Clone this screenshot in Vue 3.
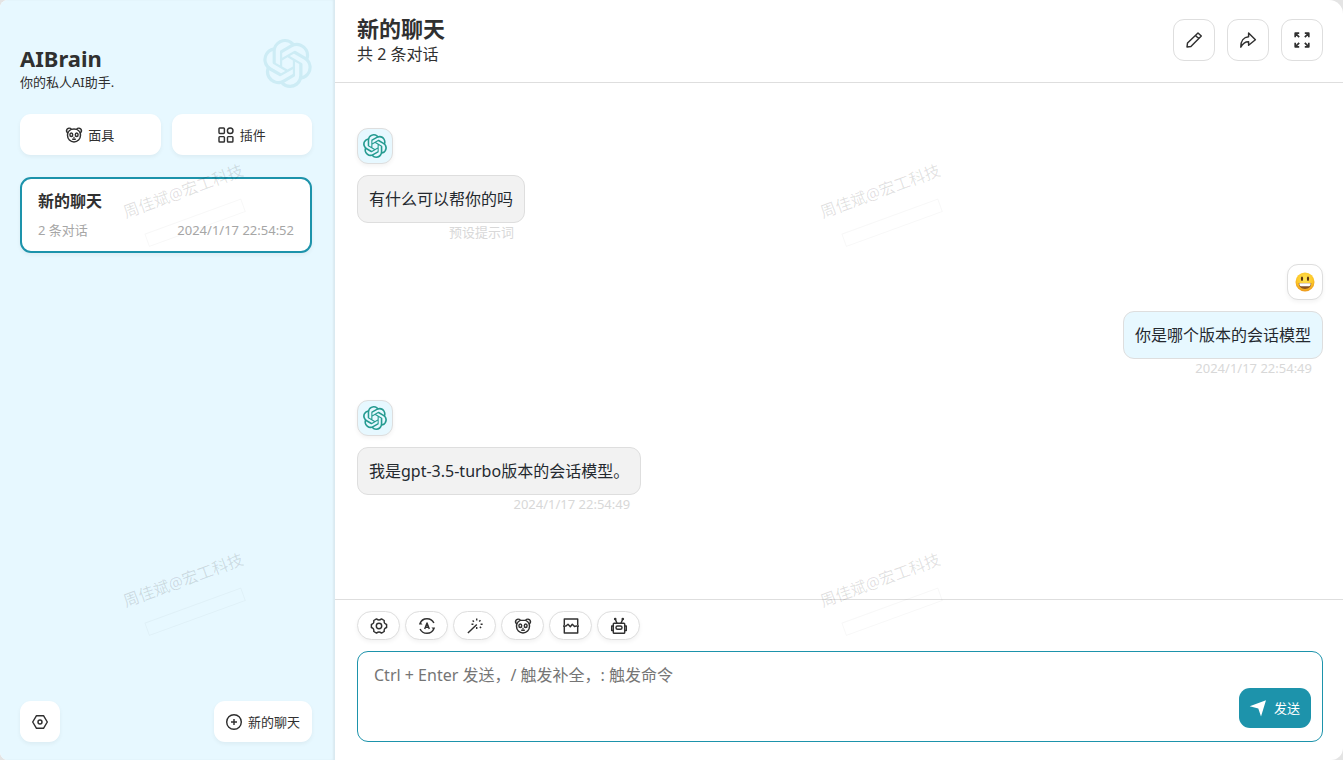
<script setup>
import { ref, h } from 'vue'

const draft = ref('')

const messages = [
  { id: 1, user: false, text: '有什么可以帮你的吗', note: '预设提示词' },
  { id: 2, user: true, text: '你是哪个版本的会话模型', note: '2024/1/17 22:54:49' },
  { id: 3, user: false, text: '我是gpt-3.5-turbo版本的会话模型。', note: '2024/1/17 22:54:49' }
]

const tools = [
  { icon: 'gear', label: '对话设置' },
  { icon: 'auto', label: '主题' },
  { icon: 'wand', label: '快捷指令' },
  { icon: 'mask', label: '面具' },
  { icon: 'split', label: '清除聊天' },
  { icon: 'robot', label: '模型' }
]

const actions = [
  { icon: 'pencil', label: '编辑' },
  { icon: 'share', label: '分享' },
  { icon: 'expand', label: '全屏' }
]

const shapes = {
  mask: '<path d="M2 5.900C.6 5.200.3 3.600.9 2.400 1.700 1 3.900.7 5.300 1.900M14 5.900c1.400-.7 1.700-2.300 1.100-3.500-.8-1.400-3-1.700-4.400-.5"/><path d="M8 2C4.200 2 1.500 4.600 1.500 8.300c0 3.900 2.900 6.700 6.500 6.700s6.500-2.800 6.500-6.700C14.500 4.600 11.800 2 8 2z"/><ellipse cx="5.300" cy="7.700" rx="1.400" ry="1.800"/><ellipse cx="10.700" cy="7.700" rx="1.400" ry="1.800"/><path d="M6.200 12.200h3.600M7.400 10.400h1.200"/>',
  grid: '<rect x="1" y="1" width="5.400" height="5.400" rx=".8"/><circle cx="12.200" cy="3.700" r="2.800"/><rect x="1" y="9.600" width="5.400" height="5.400" rx=".8"/><rect x="9.500" y="9.600" width="5.400" height="5.400" rx=".8"/>',
  hex: '<path d="M4.500 1.700h7L15.300 8l-3.800 6.300h-7L.7 8z"/><circle cx="8" cy="8" r="2"/>',
  plus: '<circle cx="8" cy="8" r="7.300"/><path d="M8 5v6M5 8h6"/>',
  pencil: '<path d="M1 15l.5-3.900L12 .9l3.300 3.200L4.900 14.500zM9.400 3.400l3.300 3.200"/>',
  share: '<path d="M8.600.9L15.400 7.800 8.600 13.200V9.800C5.300 9.600 2.900 11.500.8 15.200.6 8.800 3.900 5 8.600 4.700z"/>',
  expand: '<path d="M1.200 5.200V1.200h4M1.200 1.200l4 4M10.800 1.200h4v4M14.800 1.200l-4 4M1.200 10.800v4h4M1.200 14.800l4-4M14.800 10.800v4h-4M14.800 14.800l-4-4" stroke-width="1.700"/>',
  gear: '<path d="M5.500.9C6.500 1.700 7.200 2 8 2s1.500-.3 2.500-1.100l2.700 1.600c-.2 1.300 0 2 .4 2.700.4.600 1 .9 2 1.300v3c-1 .4-1.600.7-2 1.300-.4.700-.6 1.400-.4 2.700l-2.700 1.600C9.500 14.300 8.800 14 8 14s-1.500.3-2.500 1.100l-2.700-1.600c.2-1.300 0-2-.4-2.700-.4-.6-1-.9-2-1.300v-3c1-.4 1.600-.7 2-1.300.4-.7.6-1.400.4-2.700z"/><circle cx="8" cy="8" r="2.700"/>',
  auto: '<path d="M1 5.700C2 2.700 4.800.7 8 .7c3.100 0 5.700 1.700 6.900 4.300M15 10.300C14 13.300 11.200 15.300 8 15.300c-3.100 0-5.700-1.700-6.900-4.300"/><path d="M-.1 6.600h3.600L1.200 4zM16.100 9.400h-3.600l2.300 2.600z" fill="currentColor" stroke="none"/><path d="M5.700 11L8 5l2.300 6M6.500 9.200h3"/>',
  wand: '<path d="M.9 15L9.800 6.400M9.700.6v1.900M9.700 9v2M5.600 2.500l1.300 1.300M12.800 8.800l1.300 1.300M13.500 2.200l-1.300 1.300M4.500 6.200h1.900M13.600 6.200h2"/>',
  split: '<path d="M1.300 7V1h13.400v6M1.300 8.600v6.400h13.400V8.600M0 8h3l2-1.700L7.300 8.700 9.300 6.300l2.200 2.300L13.200 8H16"/>',
  robot: '<rect x="2.300" y="5.300" width="11.400" height="9.900" rx=".8"/><path d="M2.300 8H.7v4.400h1.600M13.700 8h1.600v4.400h-1.600M6 5.200L4.300 1.300M10 5.200l1.700-3.900"/><rect x="5" y="8" width="6" height="3.300" rx="1.500"/><circle cx="4.200" cy="1" r=".6"/><circle cx="11.800" cy="1" r=".6"/>',
  send: '<path d="M16 .2L11 16.500 8.300 8.600-.3 6.200z" fill="currentColor" stroke="none"/>'
}

const Icon = (props) =>
  h('svg', {
    viewBox: '0 0 16 16',
    width: 16,
    height: 16,
    fill: 'none',
    stroke: 'currentColor',
    'stroke-width': 1.45,
    'stroke-linejoin': 'round',
    overflow: 'visible',
    'aria-hidden': 'true',
    innerHTML: shapes[props.name]
  })
Icon.props = ['name']

const knot =
  'M22.2819 9.8211a5.9847 5.9847 0 0 0-.5157-4.9108 6.0462 6.0462 0 0 0-6.5098-2.9A6.0651 6.0651 0 0 0 4.9807 4.1818a5.9847 5.9847 0 0 0-3.9977 2.9 6.0462 6.0462 0 0 0 .7427 7.0966 5.98 5.98 0 0 0 .511 4.9107 6.051 6.051 0 0 0 6.5146 2.9001A5.9847 5.9847 0 0 0 13.2599 24a6.0557 6.0557 0 0 0 5.7718-4.2058 5.9894 5.9894 0 0 0 3.9977-2.9001 6.0557 6.0557 0 0 0-.7475-7.0729zm-9.022 12.6081a4.4755 4.4755 0 0 1-2.8764-1.0408l.1419-.0804 4.7783-2.7582a.7948.7948 0 0 0 .3927-.6813v-6.7369l2.02 1.1686a.071.071 0 0 1 .038.052v5.5826a4.504 4.504 0 0 1-4.4945 4.4944zm-9.6607-4.1254a4.4708 4.4708 0 0 1-.5346-3.0137l.142.0852 4.783 2.7582a.7712.7712 0 0 0 .7806 0l5.8428-3.3685v2.3324a.0804.0804 0 0 1-.0332.0615L9.74 19.9502a4.4992 4.4992 0 0 1-6.1408-1.6464zM2.3408 7.8956a4.485 4.485 0 0 1 2.3655-1.9728V11.6a.7664.7664 0 0 0 .3879.6765l5.8144 3.3543-2.0201 1.1685a.0757.0757 0 0 1-.071 0l-4.8303-2.7865A4.504 4.504 0 0 1 2.3408 7.872zm16.5963 3.8558L13.1038 8.364 15.1192 7.2a.0757.0757 0 0 1 .071 0l4.8303 2.7913a4.4944 4.4944 0 0 1-.6765 8.1042v-5.6772a.79.79 0 0 0-.407-.667zm2.0107-3.0231l-.142-.0852-4.7735-2.7818a.7759.7759 0 0 0-.7854 0L9.409 9.2297V6.8974a.0662.0662 0 0 1 .0284-.0615l4.8303-2.7866a4.4992 4.4992 0 0 1 6.6802 4.66zM8.3065 12.863l-2.02-1.1638a.0804.0804 0 0 1-.038-.0567V6.0742a4.4992 4.4992 0 0 1 7.3757-3.4537l-.142.0805L8.704 5.459a.7948.7948 0 0 0-.3927.6813zm1.0976-2.3654l2.602-1.4998 2.6069 1.4998v2.9994l-2.5974 1.4997-2.6067-1.4997Z'
</script>

<template>
  <div class="window">
    <aside class="sidebar">
      <div class="brand">
        <div>
          <h1>AIBrain</h1>
          <p>你的私人AI助手.</p>
        </div>
        <svg class="brand-logo" viewBox="0 0 24 24" aria-hidden="true"><path :d="knot" /></svg>
      </div>

      <div class="shortcuts">
        <button type="button" class="soft-button"><Icon name="mask" />面具</button>
        <button type="button" class="soft-button"><Icon name="grid" />插件</button>
      </div>

      <nav class="chats">
        <a href="#" class="chat-card">
          <strong>新的聊天</strong>
          <span class="chat-meta"><span>2 条对话</span><span>2024/1/17 22:54:52</span></span>
        </a>
      </nav>

      <footer class="sidebar-foot">
        <button type="button" class="soft-button compact" aria-label="设置"><Icon name="hex" /></button>
        <button type="button" class="soft-button compact"><Icon name="plus" />新的聊天</button>
      </footer>
    </aside>

    <main class="main">
      <header class="topbar">
        <div>
          <h2>新的聊天</h2>
          <p>共 2 条对话</p>
        </div>
        <div class="actions">
          <button v-for="a in actions" :key="a.icon" type="button" :aria-label="a.label">
            <Icon :name="a.icon" />
          </button>
        </div>
      </header>

      <section class="conversation">
        <article v-for="m in messages" :key="m.id" class="message" :class="{ user: m.user }">
          <div class="avatar">
            <svg v-if="m.user" class="smile" viewBox="0 0 20 20" aria-hidden="true">
              <defs>
                <radialGradient id="face" cx="50%" cy="35%" r="65%">
                  <stop offset="0" stop-color="#ffe457" />
                  <stop offset=".65" stop-color="#fdc727" />
                  <stop offset="1" stop-color="#ec961c" />
                </radialGradient>
              </defs>
              <circle cx="10" cy="10" r="9.500" fill="url(#face)" />
              <ellipse cx="7" cy="6.700" rx="1.100" ry="2.200" fill="#5b3512" />
              <ellipse cx="13" cy="6.700" rx="1.100" ry="2.200" fill="#5b3512" />
              <path d="M3.700 11h12.600c0 3.600-2.500 5.900-6.300 5.900S3.700 14.600 3.700 11z" fill="#8a5220" />
              <path d="M4.300 11.300h11.400c0 2-.6 2.900-1.700 2.900H6c-1.100 0-1.700-.9-1.700-2.900z" fill="#fff" />
            </svg>
            <svg v-else class="knot" viewBox="0 0 24 24" aria-hidden="true"><path :d="knot" /></svg>
          </div>
          <div class="bubble">{{ m.text }}</div>
          <div class="note">{{ m.note }}</div>
        </article>
      </section>

      <section class="composer">
        <div class="tools">
          <button v-for="t in tools" :key="t.icon" type="button" :aria-label="t.label">
            <Icon :name="t.icon" />
          </button>
        </div>
        <div class="field">
          <textarea
            v-model="draft"
            rows="3"
            aria-label="消息"
            placeholder="Ctrl + Enter 发送，/ 触发补全，: 触发命令"
          ></textarea>
          <button type="button" class="send"><Icon name="send" />发送</button>
        </div>
      </section>
    </main>

    <div class="watermarks" aria-hidden="true">
      <div v-for="n in 4" :key="n" class="watermark">
        <span>周佳斌@宏工科技</span>
        <i></i>
      </div>
    </div>
  </div>
</template>

<style>
body {
  margin: 0;
  background: #e4e4e4;
}
</style>

<style scoped>
* {
  box-sizing: border-box;
}
.window {
  position: relative;
  display: grid;
  grid-template-columns: 335px 1fr;
  min-height: 100vh;
  overflow: hidden;
  border-radius: 8px 14px 12px 8px;
  background: #fff;
  color: #303030;
  font-family: "Noto Sans", "Noto Sans CJK SC", sans-serif;
  font-size: 16px;
  line-height: 24px;
}
h1,
h2,
p {
  margin: 0;
}
button {
  display: flex;
  align-items: center;
  justify-content: center;
  padding: 0;
  border: 0;
  background: #fff;
  color: inherit;
  font: inherit;
  cursor: pointer;
}
svg {
  display: block;
  flex: none;
}
.sidebar {
  display: flex;
  flex-direction: column;
  padding: 39px 23px 18px 20px;
  background: #e7f8ff;
  box-shadow: inset -2px 0 2px rgba(0, 0, 0, 0.06);
  font-size: 13px;
}
.brand {
  display: flex;
  justify-content: space-between;
  height: 75px;
}
.brand h1 {
  padding-top: 4px;
  font-size: 22px;
  line-height: 30px;
}
.brand p {
  line-height: 18px;
}
.brand-logo {
  width: 49px;
  height: 49px;
  fill: #cdecf5;
}
.shortcuts {
  display: grid;
  grid-template-columns: 1fr 1fr;
  gap: 11px;
}
.soft-button {
  gap: 6px;
  height: 41px;
  border-radius: 11px;
  box-shadow: 0 2px 4px rgba(0, 0, 0, 0.05);
  line-height: 20px;
}
.compact {
  padding: 0 12px;
}
.chats {
  flex: 1;
  padding-top: 22px;
}
.chat-card {
  display: block;
  padding: 10px 16px 11px;
  border: 2px solid #1d93ab;
  border-radius: 11px;
  background: #fff;
  box-shadow: 0 2px 4px rgba(0, 0, 0, 0.05);
  color: inherit;
  text-decoration: none;
}
.chat-card strong {
  display: block;
  font-size: 16px;
}
.chat-meta {
  display: flex;
  justify-content: space-between;
  padding-top: 7px;
  color: #a6a6a6;
  line-height: 20px;
}
.sidebar-foot {
  display: flex;
  justify-content: space-between;
}
.main {
  display: flex;
  flex-direction: column;
  min-width: 0;
}
.topbar {
  display: flex;
  align-items: center;
  justify-content: space-between;
  height: 83px;
  padding: 0 20px 2px 22px;
  border-bottom: 1px solid #dedede;
}
.topbar h2 {
  font-size: 22px;
  line-height: 28px;
}
.actions {
  display: flex;
  gap: 12px;
}
.actions button {
  width: 42px;
  height: 42px;
  border: 1px solid #dedede;
  border-radius: 11px;
}
.conversation {
  display: flex;
  flex: 1;
  flex-direction: column;
  gap: 23px;
  padding: 45px 20px 22px 22px;
}
.message {
  display: flex;
  flex-direction: column;
  align-self: flex-start;
}
.message.user {
  align-self: flex-end;
}
.avatar {
  display: grid;
  place-items: center;
  width: 36px;
  height: 36px;
  border: 1px solid #dedede;
  border-radius: 11px;
  background: #e7f8ff;
  box-shadow: 0 2px 4px rgba(0, 0, 0, 0.05);
}
.user .avatar {
  align-self: flex-end;
  background: #fff;
}
.knot {
  width: 24px;
  height: 24px;
  fill: #259b91;
}
.smile {
  width: 20px;
  height: 20px;
}
.bubble {
  margin-top: 11px;
  padding: 11px;
  border: 1px solid #dedede;
  border-radius: 11px;
  background: #f2f2f2;
  color: #24292f;
}
.user .bubble {
  background: #e7f8ff;
}
.note {
  padding-right: 11px;
  color: #d8d8d8;
  font-size: 13px;
  line-height: 18px;
  text-align: right;
}
.composer {
  padding: 11px 20px 18px 22px;
  border-top: 1px solid #dedede;
}
.tools {
  display: flex;
  gap: 5px;
}
.tools button {
  width: 43px;
  height: 29px;
  border: 1px solid #dedede;
  border-radius: 15px;
  box-shadow: 0 2px 4px rgba(0, 0, 0, 0.05);
}
.field {
  position: relative;
  margin-top: 11px;
}
.field textarea {
  display: block;
  width: 100%;
  height: 91px;
  padding: 11px 100px 11px 16px;
  border: 1px solid #1d93ab;
  border-radius: 11px;
  outline: 0;
  background: #fff;
  color: inherit;
  font: inherit;
  resize: none;
}
.field textarea::placeholder {
  color: #757575;
}
.send {
  position: absolute;
  right: 12px;
  bottom: 14px;
  gap: 8px;
  height: 40px;
  padding: 0 11px;
  border-radius: 11px;
  background: #1d93ab;
  color: #fff;
  font-size: 13px;
}
.watermarks {
  position: absolute;
  top: 179px;
  left: 120px;
  display: grid;
  grid-template-columns: 697px 697px;
  grid-auto-rows: 389px;
  pointer-events: none;
}
.watermark {
  width: 127px;
  color: rgba(0, 0, 0, 0.12);
  white-space: nowrap;
  transform-origin: 63px 12px;
  transform: rotate(-20deg);
}
.watermark span {
  display: block;
}
.watermark i {
  display: block;
  width: 103px;
  height: 14px;
  margin: 15px 0 0 12px;
  border: 1px solid rgba(0, 0, 0, 0.03);
}
</style>
